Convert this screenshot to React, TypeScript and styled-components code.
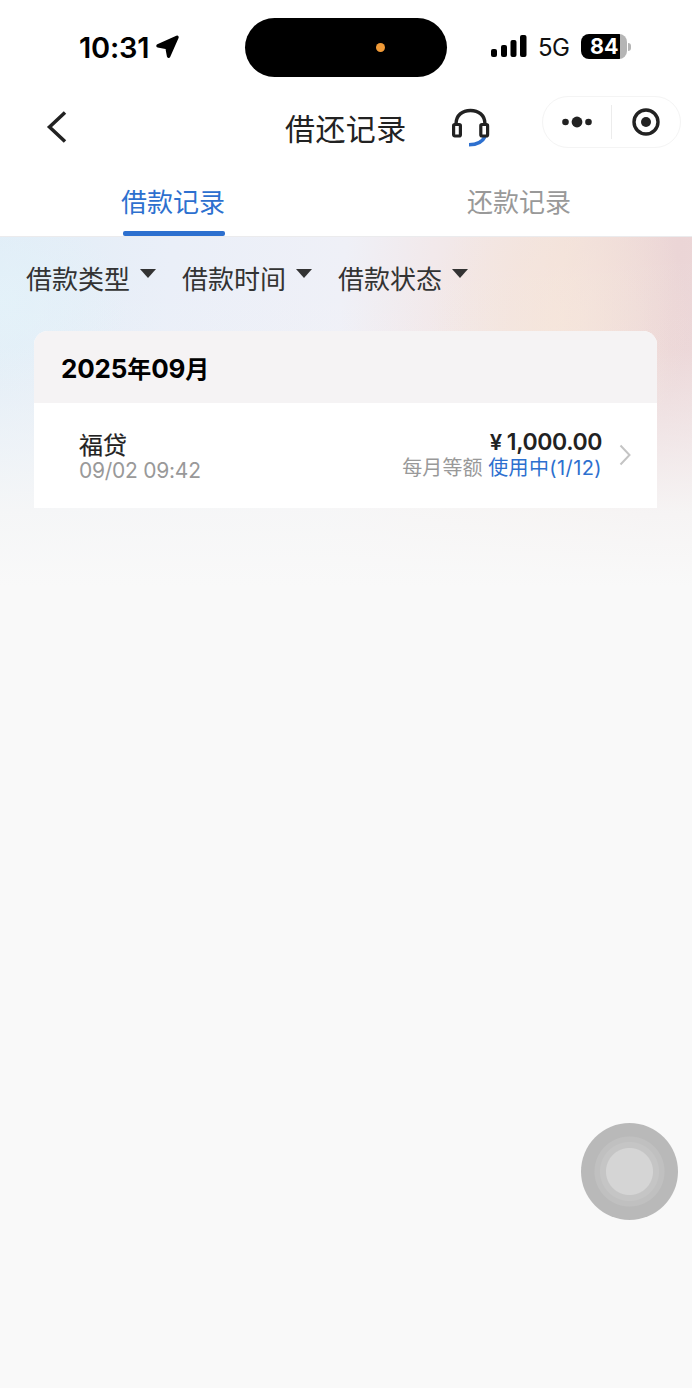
import React from "react";
import styled, { createGlobalStyle } from "styled-components";

const Global = createGlobalStyle`
  * { box-sizing: border-box; }
  body {
    margin: 0;
    background: #f9f9f9;
    font-family: Inter, "Noto Sans CJK SC", sans-serif;
    color: #222;
  }
`;

const Page = styled.div`
  width: 692px;
  height: 1388px;
  display: flex;
  flex-direction: column;
  background: #f9f9f9;
  overflow: hidden;
`;

const Top = styled.header`
  height: 237px;
  background: #fff;
  border-bottom: 1px solid #ebebed;
`;

const StatusBar = styled.div`
  height: 94px;
  display: flex;
  align-items: center;
  padding: 0 61px 0 79px;
`;

const Clock = styled.span`
  width: 77px;
  padding-top: 2px;
  font-size: 29px;
  line-height: 34px;
  font-weight: 600;
  letter-spacing: -0.2px;
  color: #000;
  white-space: nowrap;
`;

const Island = styled.div`
  width: 202px;
  height: 59px;
  margin-left: 65px;
  margin-right: 44px;
  padding-right: 62px;
  display: flex;
  align-items: center;
  justify-content: flex-end;
  border-radius: 30px;
  background: #000;
`;

const MicDot = styled.i`
  width: 9px;
  height: 9px;
  border-radius: 50%;
  background: #f09a37;
`;

const Network = styled.span`
  width: 54px;
  padding: 2px 0 0 11px;
  font-size: 24px;
  line-height: 30px;
  letter-spacing: -0.5px;
  color: #111;
`;

const Battery = styled.div`
  width: 46px;
  height: 25px;
  margin-bottom: 1px;
  border-radius: 8px;
  background: linear-gradient(90deg, #000 39px, #b5b5b5 39px);
  color: #fff;
  font-size: 21.5px;
  line-height: 25px;
  font-weight: 700;
  padding-left: 9px;
`;

const BatteryCap = styled.i`
  width: 3px;
  height: 8px;
  margin-left: 1px;
  border-radius: 0 4px 4px 0;
  background: #b5b5b5;
`;

const NavBar = styled.div`
  height: 74px;
  display: flex;
  align-items: flex-start;
  padding-left: 46px;
`;

const NavTitle = styled.h1`
  width: 122px;
  margin: 15px 0 0 216px;
  font-size: 30px;
  line-height: 40px;
  font-weight: 400;
  letter-spacing: 0.4px;
  white-space: nowrap;
`;

const Capsule = styled.div`
  width: 139px;
  height: 52px;
  margin: 2px 0 0 51px;
  display: flex;
  align-items: center;
  border: 1px solid #f4f4f4;
  border-radius: 26px;
`;

const CapsuleButton = styled.button`
  flex: 1;
  height: 34px;
  padding: 0;
  display: flex;
  align-items: center;
  justify-content: center;
  border: 0;
  background: none;
  & + & { border-left: 1px solid #ececec; }
`;

const Tabs = styled.nav`
  height: 68px;
  display: flex;
`;

const Tab = styled.div<{ $active?: boolean }>`
  flex: 1;
  display: flex;
  flex-direction: column;
  align-items: center;
  padding-top: 17px;
  font-size: 26px;
  line-height: 36px;
  color: ${(p) => (p.$active ? "#2d70cf" : "#999")};
`;

const TabLine = styled.i`
  width: 102px;
  height: 5px;
  margin: 10px 0 0 2px;
  border-radius: 2px;
  background: #2d70cf;
`;

const Content = styled.main`
  flex: 1;
  padding: 0 35px 0 34px;
  background:
    linear-gradient(180deg, rgba(249,249,249,0) 0, rgba(249,249,249,0.05) 110px, rgba(247,247,248,0.5) 200px, rgba(247,247,247,0.9) 275px, #f9f9f9 350px),
    radial-gradient(ellipse 130px 90px at 0 65px, rgba(227,242,249,0.9), rgba(227,242,249,0)),
    radial-gradient(ellipse 130px 150px at 560px 80px, rgba(246,229,218,0.8), rgba(246,229,218,0)),
    linear-gradient(95deg, #e1edf7 0, #eaeff8 24%, #eff0f7 48%, #f2e9eb 60%, #f2e2dc 78%, #ebd5d6 94%, #ecd7d8 100%);
  background-size: 692px 350px;
  background-repeat: no-repeat;
`;

const Filters = styled.div`
  height: 94px;
  margin-left: -8px;
  display: flex;
  gap: 26px;
`;

const FilterItem = styled.div`
  width: 130px;
  padding-top: 25px;
  display: flex;
  gap: 10px;
  font-size: 26px;
  line-height: 36px;
  color: #333;
  white-space: nowrap;
  svg { margin-top: 7px; flex: none; }
`;

const Card = styled.section`
  border-radius: 14px 14px 0 0;
  overflow: hidden;
  background: #fff;
`;

const Month = styled.h2`
  height: 72px;
  margin: 0;
  padding-left: 27px;
  background: #f5f3f4;
  color: #000;
  font-size: 26px;
  line-height: 75px;
  font-weight: 700;
  letter-spacing: -0.15px;
`;

const MonthUnit = styled.span`
  font-size: 24px;
`;

const Loan = styled.div`
  height: 105px;
  padding: 26px 26px 0 45px;
  display: flex;
`;

const LoanInfo = styled.div`
  flex: 1;
`;

const LoanName = styled.div`
  padding-top: 1px;
  font-size: 24px;
  line-height: 31px;
  -webkit-text-stroke: 0.2px #222;
`;

const LoanTime = styled.div`
  font-size: 21px;
  line-height: 20px;
  letter-spacing: -0.25px;
  color: #999;
`;

const LoanSide = styled.div`
  display: flex;
  flex-direction: column;
  align-items: flex-end;
  white-space: nowrap;
`;

const Amount = styled.div`
  font-size: 23px;
  line-height: 27px;
  font-weight: 600;
  letter-spacing: -0.4px;
`;

const Yen = styled.span`
  font-size: 22px;
  margin-right: 5px;
`;

const State = styled.div`
  font-size: 20px;
  line-height: 24px;
  letter-spacing: 0.4px;
  color: #2d70cf;
`;

const Method = styled.span`
  margin-right: 5.5px;
  letter-spacing: 0.1px;
  color: #999;
`;

const ChevronBox = styled.div`
  margin: 15px 0 0 17px;
  svg { display: block; }
`;

const AssistiveTouch = styled.button`
  position: fixed;
  left: 581px;
  top: 1123px;
  width: 97px;
  height: 97px;
  padding: 0;
  border: 0;
  border-radius: 50%;
  background: radial-gradient(circle, #d5d5d5 23px, #c5c5c5 24px 29px, #c0c0c0 30px 34.5px, #b9b9b9 35.5px);
`;

const filters = ["借款类型", "借款时间", "借款状态"];

const LocationIcon = () => (
  <svg width="24" height="24" viewBox="0 0 24 24">
    <path d="M2 10.800 21 2.300 12.600 21.300 11 12.700Z" fill="#000" stroke="#000" strokeWidth="3.400" strokeLinejoin="round" />
  </svg>
);

const Signal = styled.svg`
  margin-bottom: 2px;
`;

const SignalIcon = () => (
  <Signal width="36" height="24" viewBox="0 0 36 24">
    <rect x="0" y="15" width="6" height="8" rx="2" />
    <rect x="10" y="11" width="6" height="12" rx="2" />
    <rect x="19.5" y="6" width="6" height="17" rx="2" />
    <rect x="29" y="1" width="6.5" height="22" rx="2" />
  </Signal>
);

const Back = styled.svg`
  margin-top: 16px;
`;

const BackIcon = () => (
  <Back width="23" height="34" viewBox="0 0 23 34">
    <path d="M19 2.5 3.5 17 19 31.5" fill="none" stroke="#222" strokeWidth="3.5" />
  </Back>
);

const Headset = styled.svg`
  margin: 14px 0 0 44px;
`;

const HeadsetIcon = () => (
  <Headset width="40" height="40" viewBox="0 0 40 40" fill="none">
    <path d="M5 16C5 7 11.500 2.500 19.500 2.500S34 7 34 16" stroke="#222" strokeWidth="3.400" />
    <path d="M34 28.500C31.500 34 26 36.700 18 36.700" stroke="#2d70cf" strokeWidth="3.600" />
    <rect x="2.600" y="16.500" width="6.800" height="11.500" rx="1.200" stroke="#222" strokeWidth="3.200" />
    <rect x="29.800" y="16.500" width="6.800" height="11.500" rx="1.200" stroke="#222" strokeWidth="3.200" />
  </Headset>
);

export default function App() {
  return (
    <Page>
      <Global />
      <Top>
        <StatusBar>
          <Clock>10:31</Clock>
          <LocationIcon />
          <Island><MicDot /></Island>
          <SignalIcon />
          <Network>5G</Network>
          <Battery>84</Battery>
          <BatteryCap />
        </StatusBar>
        <NavBar>
          <BackIcon />
          <NavTitle>借还记录</NavTitle>
          <HeadsetIcon />
          <Capsule>
            <CapsuleButton aria-label="更多">
              <svg width="32" height="12" viewBox="0 0 32 12" fill="#222">
                <circle cx="4.500" cy="6" r="3.300" />
                <circle cx="16" cy="6" r="5.400" />
                <circle cx="27.500" cy="6" r="3.300" />
              </svg>
            </CapsuleButton>
            <CapsuleButton aria-label="关闭">
              <svg width="28" height="28" viewBox="0 0 28 28">
                <circle cx="14" cy="14" r="12" fill="none" stroke="#222" strokeWidth="3.400" />
                <circle cx="14" cy="14" r="5" fill="#222" />
              </svg>
            </CapsuleButton>
          </Capsule>
        </NavBar>
        <Tabs>
          <Tab $active>借款记录<TabLine /></Tab>
          <Tab>还款记录</Tab>
        </Tabs>
      </Top>
      <Content>
        <Filters>
          {filters.map((label) => (
            <FilterItem key={label}>
              {label}
              <svg width="16" height="9" viewBox="0 0 16 9"><path d="M0 0H16L8 9Z" fill="#333" /></svg>
            </FilterItem>
          ))}
        </Filters>
        <Card>
          <Month>2025<MonthUnit>年</MonthUnit>09<MonthUnit>月</MonthUnit></Month>
          <Loan>
            <LoanInfo>
              <LoanName>福贷</LoanName>
              <LoanTime>09/02 09:42</LoanTime>
            </LoanInfo>
            <LoanSide>
              <Amount><Yen>¥</Yen>1,000.00</Amount>
              <State><Method>每月等额</Method>使用中(1/12)</State>
            </LoanSide>
            <ChevronBox>
              <svg width="12" height="22" viewBox="0 0 12 22"><path d="M1.500 1.500 10.500 11 1.500 20.500" fill="none" stroke="#c4c4c4" strokeWidth="2" /></svg>
            </ChevronBox>
          </Loan>
        </Card>
      </Content>
      <AssistiveTouch aria-label="辅助触控" />
    </Page>
  );
}
